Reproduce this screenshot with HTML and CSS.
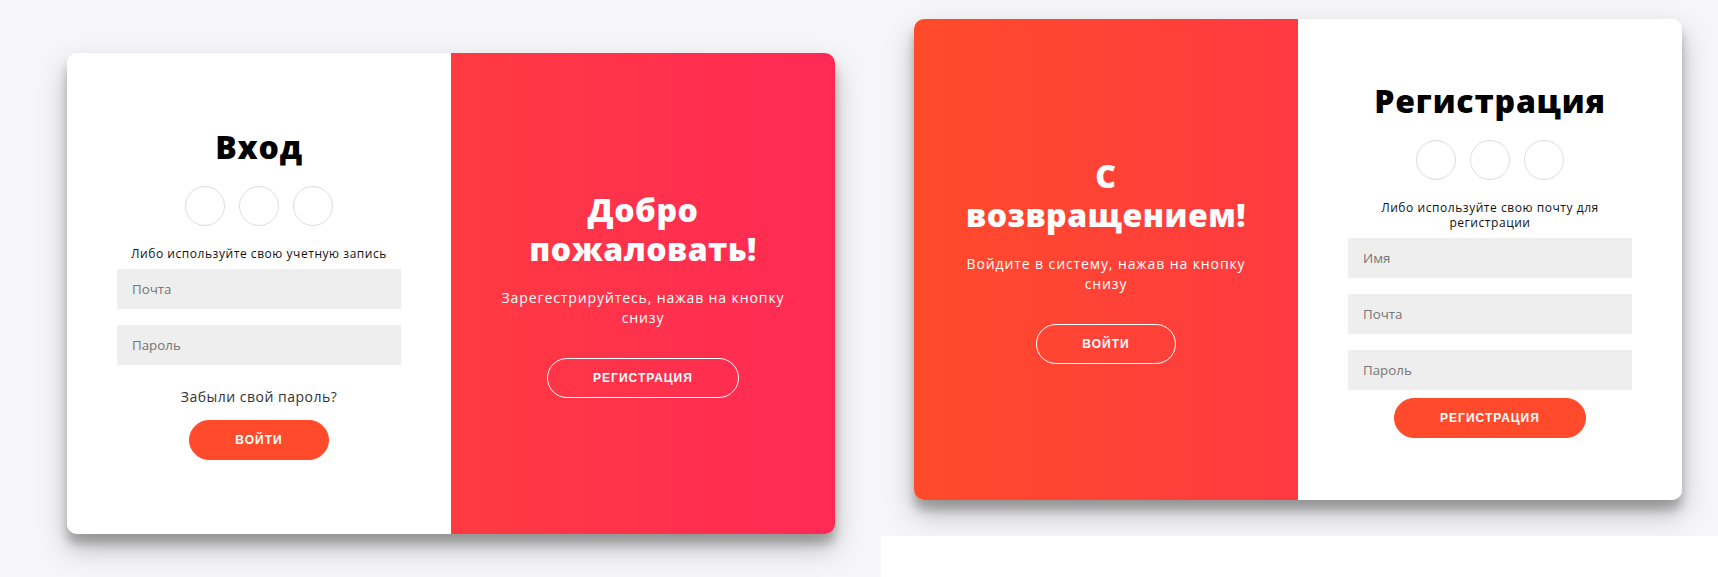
FILE: index.html
```html
<!DOCTYPE html>
<html lang="ru">
<head>
<meta charset="utf-8">
<title>Вход и регистрация</title>
<link rel="stylesheet" href="styles.css">
</head>
<body>
<div class="page">
  <section class="demo demo-login">
    <div class="card">
      <form class="form">
        <h1 class="title">Вход</h1>
        <div class="social">
          <a class="social-link" href="#"></a>
          <a class="social-link" href="#"></a>
          <a class="social-link" href="#"></a>
        </div>
        <span class="hint">Либо используйте свою учетную запись</span>
        <input class="field" type="email" placeholder="Почта">
        <input class="field" type="password" placeholder="Пароль">
        <a class="forgot" href="#">Забыли свой пароль?</a>
        <button class="btn" type="button">Войти</button>
      </form>
      <div class="panel panel-welcome">
        <h1 class="title title-light">Добро пожаловать!</h1>
        <p class="panel-text">Зарегестрируйтесь, нажав на кнопку снизу</p>
        <button class="btn btn-ghost" type="button">Регистрация</button>
      </div>
    </div>
  </section>
  <section class="demo demo-register">
    <div class="card card-register">
      <div class="panel panel-back">
        <h1 class="title title-light">С возвращением!</h1>
        <p class="panel-text">Войдите в систему, нажав на кнопку снизу</p>
        <button class="btn btn-ghost" type="button">Войти</button>
      </div>
      <form class="form">
        <h1 class="title">Регистрация</h1>
        <div class="social">
          <a class="social-link" href="#"></a>
          <a class="social-link" href="#"></a>
          <a class="social-link" href="#"></a>
        </div>
        <span class="hint">Либо используйте свою почту для регистрации</span>
        <input class="field" type="text" placeholder="Имя">
        <input class="field" type="email" placeholder="Почта">
        <input class="field" type="password" placeholder="Пароль">
        <button class="btn" type="button">Регистрация</button>
      </form>
    </div>
    <div class="footer-block"></div>
  </section>
</div>
</body>
</html>
```

FILE: styles.css
```css
* {
  box-sizing: border-box;
}

html, body {
  margin: 0;
  padding: 0;
}

body {
  background: #f6f5f7;
  font-family: "Open Sans", "Noto Sans", sans-serif;
  color: #000;
  overflow: hidden;
}

.page {
  display: flex;
  height: 577px;
  overflow: hidden;
}

.demo-login {
  width: 881px;
  flex: none;
  padding: 53px 0 0 67px;
}

.demo-register {
  flex: 1;
  padding-top: 19px;
}

.card-register {
  margin-left: 33px;
}

.footer-block {
  margin-top: 36px;
  height: 80px;
  background: #fff;
}

.card {
  width: 768px;
  height: 481px;
  display: grid;
  grid-template-columns: 384px 384px;
  border-radius: 10px;
  overflow: hidden;
  background: #fff;
  box-shadow: 0 14px 28px rgba(0, 0, 0, 0.25), 0 10px 10px rgba(0, 0, 0, 0.22);
}

.form {
  margin: 0;
  background: #fff;
  display: flex;
  flex-direction: column;
  align-items: center;
  justify-content: center;
  padding: 0 50px;
  text-align: center;
}

.title {
  margin: 0;
  font-size: 32px;
  line-height: 39px;
  font-weight: 800;
  letter-spacing: 0.8px;
  color: #000;
}

.title-light {
  color: #fff;
  letter-spacing: 0.5px;
}

.social {
  display: flex;
  gap: 14px;
  margin: 20px 0;
}

.social-link {
  width: 40px;
  height: 40px;
  border: 1px solid #ddd;
  border-radius: 50%;
}

.hint {
  font-size: 12px;
  line-height: 15px;
  letter-spacing: 0.55px;
  color: #111;
}

.field {
  width: 100%;
  height: 40px;
  margin: 8px 0;
  padding: 12px 15px;
  border: none;
  background: #eee;
  font-family: "Open Sans", sans-serif;
  font-size: 13.33px;
  color: #333;
  outline: none;
}

.field::placeholder {
  color: #757575;
}

.forgot {
  margin: 15px 0;
  font-size: 14px;
  line-height: 17px;
  letter-spacing: 0.5px;
  color: #333;
  text-decoration: none;
}

.btn {
  height: 40px;
  padding: 12px 45px;
  border-radius: 20px;
  border: 1px solid #ff4b2b;
  background: #ff4b2b;
  color: #fff;
  font-family: "Liberation Sans", Arial, sans-serif;
  font-size: 12px;
  line-height: 14px;
  font-weight: bold;
  letter-spacing: 1px;
  text-transform: uppercase;
  cursor: pointer;
}

.btn-ghost {
  background: transparent;
  border-color: #fff;
}

.panel {
  display: flex;
  flex-direction: column;
  align-items: center;
  justify-content: center;
  padding: 0 40px;
  text-align: center;
  color: #fff;
}

.panel-welcome {
  background: linear-gradient(to right, #ff3a41, #ff2956);
}

.panel-back {
  background: linear-gradient(to right, #ff4b2b, #ff3a41);
}

.panel-text {
  margin: 20px 0 30px;
  font-size: 14px;
  line-height: 20px;
  font-weight: 400;
  letter-spacing: 0.9px;
}
```
